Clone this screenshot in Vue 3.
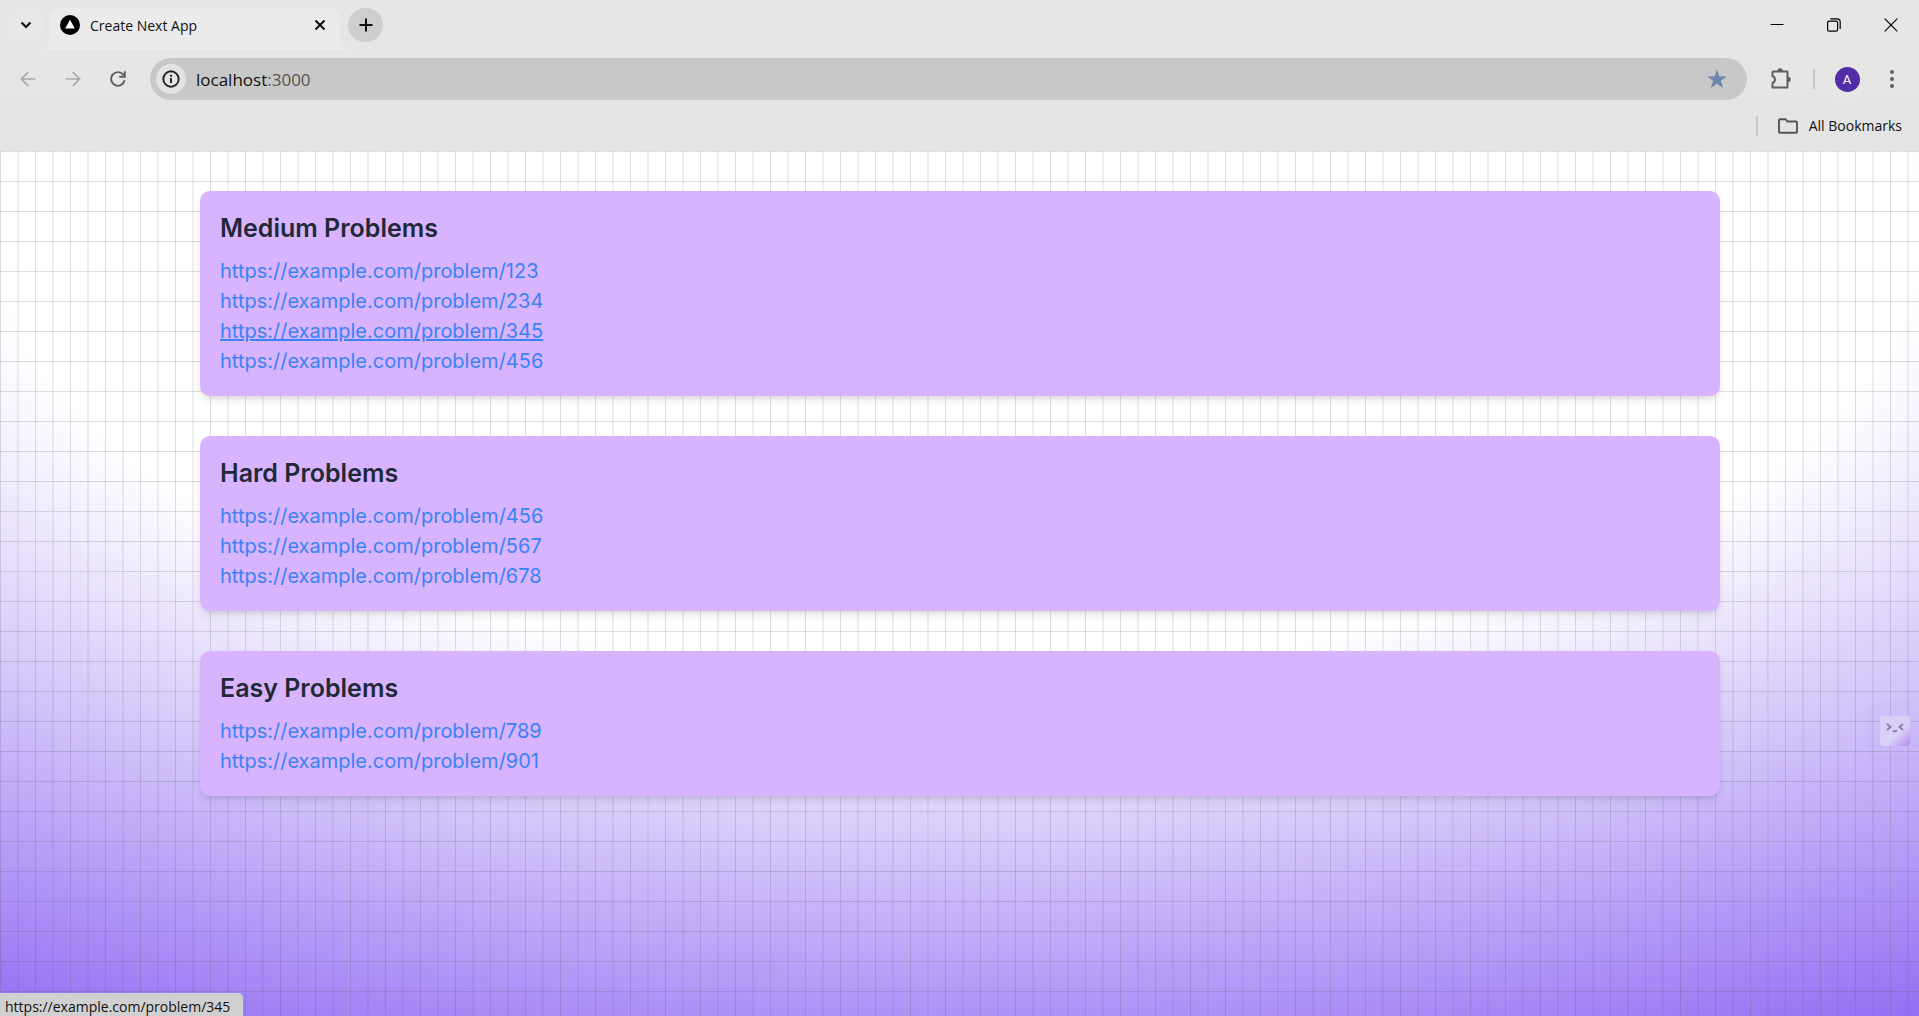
<script setup>
const groups = [
  { title: 'Medium Problems', ids: [123, 234, 345, 456] },
  { title: 'Hard Problems', ids: [456, 567, 678] },
  { title: 'Easy Problems', ids: [789, 901] },
]
const base = 'https://example.com/problem/'
const hovered = base + 345
</script>

<template>
  <div class="window">
    <header class="chrome">
      <div class="tabstrip">
        <div class="search-slot">
          <button class="tab-search" aria-label="Search tabs">
            <svg width="12" height="12" viewBox="0 0 12 12"><path d="M1.500 3.500 6 8l4.500-4.500" fill="none" stroke="#111" stroke-width="2.200" /></svg>
          </button>
        </div>
        <div class="tab">
          <svg width="20" height="20" viewBox="0 0 20 20"><circle cx="10" cy="10" r="10" /><path d="M10 4.800 14.800 13.500H5.200z" fill="#fff" /></svg>
          <span class="tab-title">Create Next App</span>
          <button class="tab-close" aria-label="Close tab">
            <svg width="12" height="12" viewBox="0 0 12 12"><path d="m1.500 1.500 9 9m0-9-9 9" stroke="#111" stroke-width="2" /></svg>
          </button>
        </div>
        <div class="new-slot">
          <button class="new-tab" aria-label="New tab">
            <svg width="14" height="14" viewBox="0 0 14 14"><path d="M7 .5v13M.5 7h13" stroke="#111" stroke-width="2" /></svg>
          </button>
        </div>
        <div class="controls">
          <button aria-label="Minimize"><svg width="14" height="14" viewBox="0 0 14 14"><path d="M.5 6.500h13" stroke="#000" /></svg></button>
          <button aria-label="Restore"><svg width="14" height="14" viewBox="0 0 14 14" fill="none" stroke="#000" stroke-width="1.200"><rect x=".6" y="3.200" width="10" height="10" rx="1.500" /><path d="M3.200 .8H10a3.200 3.200 0 0 1 3.200 3.200v7" /></svg></button>
          <button aria-label="Close"><svg width="14" height="14" viewBox="0 0 14 14"><path d="m.7.7 12.600 12.600m0-12.600L.7 13.300" stroke="#000" stroke-width="1.200" /></svg></button>
        </div>
      </div>

      <div class="toolbar">
        <button class="nav" aria-label="Back" disabled>
          <svg width="16" height="16" viewBox="0 0 16 16" fill="none" stroke="#aaa" stroke-width="1.700"><path d="M15.500 8H1.500M8.200 1.200 1.400 8l6.800 6.800" /></svg>
        </button>
        <button class="nav" aria-label="Forward" disabled>
          <svg width="16" height="16" viewBox="0 0 16 16" fill="none" stroke="#aaa" stroke-width="1.700"><path d="M.5 8h14M7.800 1.200 14.600 8l-6.800 6.800" /></svg>
        </button>
        <button class="nav" aria-label="Reload">
          <svg width="16" height="16" viewBox="0 0 16 16" fill="none" stroke="#5c5f62" stroke-width="1.900"><path d="M14.600 9.300A6.800 6.800 0 1 1 13.300 3.700L14.600 5.400" /><path d="M14.800 .3v5.500H9.200" /></svg>
        </button>
        <div class="omnibox">
          <button class="info" aria-label="View site information">
            <svg width="18" height="18" viewBox="0 0 18 18"><circle cx="9" cy="9" r="7.700" fill="none" stroke="#222" stroke-width="1.900" /><path d="M9 8v5M9 4.800v1.900" stroke="#222" stroke-width="1.900" /></svg>
          </button>
          <span class="url">localhost<span class="port">:3000</span></span>
          <button class="star" aria-label="Edit bookmark">
            <svg width="20" height="20" viewBox="0 0 20 20"><path d="m10 .3 2.400 6.900 7.400.2-5.900 4.400 2.200 7.200L10 14.700 3.900 19l2.200-7.200L.2 7.400l7.400-.2z" fill="#6f86ad" /></svg>
          </button>
        </div>
        <button class="ext" aria-label="Extensions">
          <svg width="22" height="22" viewBox="0 0 22 22"><path d="M3.300 3.500H17.500V19.500H2.500V14.700C5.800 13.800 5.800 9 2.500 8.200V4.300a.8.8 0 0 1 .8-.8z" fill="none" stroke="#5c5f62" stroke-width="2" stroke-linejoin="round" /><path d="M7.500 3a2.700 2.700 0 0 1 5.400 0zM18 8.800a2.700 2.700 0 0 1 0 5.400z" fill="#5c5f62" /></svg>
        </button>
        <span class="divider"></span>
        <button class="profile" aria-label="Profile"><span class="avatar">A</span></button>
        <button class="menu" aria-label="Menu">
          <svg width="4" height="18" viewBox="0 0 4 18" fill="#5c5f62"><circle cx="2" cy="2" r="2" /><circle cx="2" cy="9" r="2" /><circle cx="2" cy="16" r="2" /></svg>
        </button>
      </div>

      <div class="bookmarks">
        <span class="divider"></span>
        <button class="all">
          <svg width="20" height="16" viewBox="0 0 20 16"><path d="M1 13.800V2.200a1 1 0 0 1 1-1H7.500L9.500 3.500H18a1 1 0 0 1 1 1v9.300a1 1 0 0 1-1 1H2a1 1 0 0 1-1-1z" fill="none" stroke="#555" stroke-width="1.900" /></svg>
          All Bookmarks
        </button>
      </div>
    </header>

    <main class="page">
      <section v-for="g in groups" :key="g.title" class="card">
        <h2>{{ g.title }}</h2>
        <ul>
          <li v-for="id in g.ids" :key="id">
            <a :href="base + id" :class="{ hovered: base + id === hovered }">{{ base + id }}</a>
          </li>
        </ul>
      </section>
      <button class="widget" aria-label="Open assistant">
        <span class="face">
          <svg width="18" height="10" viewBox="0 0 18 10" fill="none" stroke="#8a7fae" stroke-width="2"><path d="m1 1 3.500 3L1 7M17 1l-3.500 3L17 7M7 7.500q2 1.500 4 0" /></svg>
        </span>
      </button>
      <div class="status">{{ hovered }}</div>
    </main>
  </div>
</template>

<style>
body {
  margin: 0;
}
</style>

<style scoped>
.window {
  display: flex;
  flex-direction: column;
  min-height: 100vh;
  font-family: "Open Sans", "Noto Sans", sans-serif;
  color: #111;
}
button {
  display: flex;
  align-items: center;
  justify-content: center;
  padding: 0;
  border: 0;
  background: none;
  font: inherit;
  color: inherit;
}
.chrome {
  background: linear-gradient(#e9e9e9, #e4e4e4 80%);
}
.tabstrip {
  display: flex;
  height: 50px;
  background: #ebebeb;
}
.search-slot {
  width: 50px;
  padding: 8px 0 0 8px;
  box-sizing: border-box;
  background: #e6e6e6;
  border-bottom-right-radius: 12px;
}
.tab-search {
  width: 35px;
  height: 34px;
  border-radius: 12px;
  background: #e8e8e8;
}
.tab {
  display: flex;
  align-items: center;
  gap: 10px;
  width: 290px;
  height: 42px;
  padding: 0 13px 8px 10px;
  margin-top: 8px;
  box-sizing: border-box;
  border-radius: 12px 12px 0 0;
  background: #ebebeb;
  box-shadow: 0 -8px 0 8px #e6e6e6;
  clip-path: inset(-8px 0 0 0);
}
.tab-title {
  flex: 1;
  font-size: 14px;
}
.tab-close {
  width: 14px;
  height: 14px;
}
.new-slot {
  flex: 1;
  padding: 8px 0 0 8px;
  background: #e6e6e6;
  border-bottom-left-radius: 12px;
}
.new-tab {
  width: 35px;
  height: 34px;
  border-radius: 17px;
  background: #cecece;
}
.controls {
  display: flex;
  background: #e6e6e6;
}
.controls button {
  width: 57px;
  height: 49px;
}
.toolbar {
  display: flex;
  align-items: center;
  height: 42px;
  padding: 8px 12px 9px 5px;
}
.nav {
  width: 45px;
  height: 42px;
}
.omnibox {
  display: flex;
  align-items: center;
  flex: 1;
  height: 42px;
  margin-left: 10px;
  padding: 0 20px 0 6px;
  box-sizing: border-box;
  border-radius: 21px;
  background: #c8c8c8;
}
.info {
  width: 30px;
  height: 30px;
  border-radius: 50%;
  background: #e3e3e3;
}
.url {
  flex: 1;
  margin-left: 10px;
  font-size: 17px;
}
.port {
  color: #555;
}
.ext {
  width: 22px;
  margin-left: 23px;
}
.divider {
  width: 2px;
  height: 20px;
  background: #c8c8c8;
}
.toolbar .divider {
  margin: 0 11px 0 21px;
}
.profile {
  width: 42px;
  height: 42px;
  border-radius: 50%;
  background: #e6e6e6;
}
.avatar {
  width: 25px;
  border-radius: 50%;
  background: #512da8;
  color: #fff;
  font: 13px/25px Roboto, sans-serif;
}
.menu {
  width: 30px;
  height: 30px;
  margin-left: 9px;
}
.bookmarks {
  display: flex;
  align-items: center;
  justify-content: flex-end;
  height: 33px;
  padding: 0 17px 9px 0;
}
.all {
  gap: 11px;
  margin-left: 20px;
  font-size: 14px;
}
.page {
  position: relative;
  flex: 1;
  padding: 40px 39px 1px 40px;
  background:
    linear-gradient(to right, #4f4f4f2e 1px, transparent 1px) 0 0 / 35px 30px,
    linear-gradient(to right, #4f4f4f17 2px, transparent 2px) 17px 0 / 35px 30px,
    linear-gradient(to bottom, #4f4f4f2e 1px, transparent 1px) 0 0 / 35px 30px,
    radial-gradient(125% 125% at 50% 10%, #fff 40%, #6633ee 100%);
}
.card {
  max-width: 1520px;
  margin: 0 auto 40px;
  padding: 20px;
  box-sizing: border-box;
  border-radius: 10px;
  background: #d8b4fe;
  box-shadow: 0 5px 8px -1px #0000001a, 0 3px 5px -3px #0000001a;
  font-family: Inter, sans-serif;
}
h2 {
  margin: 0 0 10px;
  font-size: 25px;
  line-height: 35px;
  font-weight: 600;
  color: #1f2937;
}
ul {
  margin: 0;
  padding: 0;
  list-style: none;
}
li {
  font-size: 20px;
  line-height: 30px;
}
a {
  color: #3b82f6;
  text-decoration: none;
}
a.hovered {
  text-decoration: underline;
}
.widget {
  position: absolute;
  right: 0;
  top: 555px;
  width: 48px;
  height: 50px;
  border-radius: 6px 0 0 6px;
  box-shadow: 0 0 4px #7050c018;
}
.face {
  display: flex;
  justify-content: center;
  width: 30px;
  height: 30px;
  padding-top: 7px;
  box-sizing: border-box;
  border-radius: 4px;
  background: linear-gradient(135deg, #d9d0f8 60%, #b48cf0);
}
.status {
  position: absolute;
  left: 0;
  bottom: 0;
  width: 243px;
  height: 23px;
  padding-left: 5px;
  box-sizing: border-box;
  border-top-right-radius: 5px;
  background: #d0d0d0;
  font-size: 14px;
  line-height: 27px;
}
</style>
